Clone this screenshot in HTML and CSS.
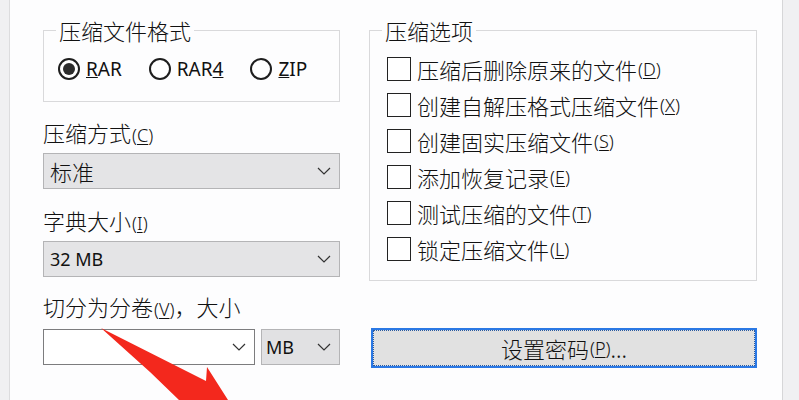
FILE: index.html
```html
<!DOCTYPE html>
<html lang="zh-CN">
<head>
<meta charset="utf-8">
<link rel="stylesheet" href="styles.css">
</head>
<body>
<div class="window">
  <div class="edge-left"></div>
  <div class="dialog">
    <div class="col-left">
      <fieldset class="group group-format">
        <legend>压缩文件格式</legend>
        <div class="radios">
          <div class="opt"><span class="radio on"></span><span class="lat"><u>R</u>AR</span></div>
          <div class="opt"><span class="radio"></span><span class="lat">RAR<u>4</u></span></div>
          <div class="opt"><span class="radio"></span><span class="lat"><u>Z</u>IP</span></div>
        </div>
      </fieldset>
      <div class="label first">压缩方式<span class="key">(<u>C</u>)</span></div>
      <div class="combo"><span class="val">标准</span><svg class="chev" viewBox="0 0 14 8"><path d="M1 1 L7 7 L13 1"/></svg></div>
      <div class="label">字典大小<span class="key">(<u>I</u>)</span></div>
      <div class="combo"><span class="val small">32 MB</span><svg class="chev" viewBox="0 0 14 8"><path d="M1 1 L7 7 L13 1"/></svg></div>
      <div class="label third">切分为分卷<span class="key">(<u>V</u>)</span>，大小</div>
      <div class="combo-row">
        <div class="combo edit"><span class="val"></span><svg class="chev" viewBox="0 0 14 8"><path d="M1 1 L7 7 L13 1"/></svg></div>
        <div class="combo unit"><span class="val small">MB</span><svg class="chev" viewBox="0 0 14 8"><path d="M1 1 L7 7 L13 1"/></svg></div>
      </div>
    </div>
    <div class="col-right">
      <fieldset class="group group-opts">
        <legend>压缩选项</legend>
        <div class="check"><span class="box"></span>压缩后删除原来的文件<span class="key">(<u>D</u>)</span></div>
        <div class="check"><span class="box"></span>创建自解压格式压缩文件<span class="key">(<u>X</u>)</span></div>
        <div class="check"><span class="box"></span>创建固实压缩文件<span class="key">(<u>S</u>)</span></div>
        <div class="check"><span class="box"></span>添加恢复记录<span class="key">(<u>E</u>)</span></div>
        <div class="check"><span class="box"></span>测试压缩的文件<span class="key">(<u>T</u>)</span></div>
        <div class="check"><span class="box"></span>锁定压缩文件<span class="key">(<u>L</u>)</span></div>
      </fieldset>
      <div class="btn">设置密码<span class="key">(<u>P</u>)</span>...</div>
    </div>
  </div>
  <div class="edge-right"></div>
</div>
<svg class="arrow" viewBox="0 0 799 400" width="799" height="400"><polygon points="101,328 206,381 207,367 228,400 179,400 150,372"/></svg>
</body>
</html>
```

FILE: styles.css
```css
html, body {
  margin: 0;
  padding: 0;
  width: 799px;
  height: 400px;
  overflow: hidden;
  background: #fdfdfe;
}
body {
  position: relative;
  font-family: "Noto Sans CJK SC", "Noto Sans", sans-serif;
  font-weight: 300;
  color: #111;
  font-size: 22px;
}
.window {
  display: flex;
  height: 400px;
}
.edge-left {
  width: 9px;
  background: #f0f0f2;
  border-right: 1px solid #dcdcde;
  flex: none;
}
.dialog {
  flex: 1;
  display: flex;
  gap: 29px;
  padding: 17px 0 0 33px;
  background: #fdfdfe;
}
.edge-right {
  width: 16px;
  flex: none;
  background: #f0f0f2;
  border-left: 1px solid #d6d6d8;
}
.col-left {
  width: 297px;
  display: flex;
  flex-direction: column;
}
.col-right {
  width: 388px;
  display: flex;
  flex-direction: column;
}
.group {
  margin: 0;
  border: 1px solid #d9d9db;
  min-width: 0;
}
.group legend {
  font-size: 22px;
  line-height: 26px;
  height: 26px;
  padding: 0 3px;
  margin-left: -2px;
}
.group-format {
  padding: 8px 0 14px 14px;
}
.radios {
  display: flex;
  gap: 27px;
  height: 36px;
  align-items: center;
}
.opt {
  display: flex;
  align-items: center;
  gap: 6px;
}
.lat {
  font-family: "Noto Sans", sans-serif;
  font-weight: 400;
  font-size: 19px;
  line-height: 24px;
}
.radio {
  width: 22px;
  height: 22px;
  border: 2px solid #1e1e1e;
  border-radius: 50%;
  box-sizing: border-box;
  display: flex;
  align-items: center;
  justify-content: center;
  background: #fff;
}
.radio.on::after {
  content: "";
  width: 12px;
  height: 12px;
  border-radius: 50%;
  background: #2c2c2c;
}
.label {
  height: 30px;
  line-height: 30px;
  margin-top: 16px;
  margin-bottom: 6px;
  white-space: nowrap;
}
.label.first {
  margin-top: 15px;
}
.label.third {
  margin-top: 14px;
  margin-bottom: 8px;
}
.key {
  font-family: "Noto Sans", sans-serif;
  font-weight: 300;
  font-size: 18px;
  line-height: 1;
  margin-left: 1px;
}
.key u {
  text-underline-offset: 2px;
}
.combo {
  height: 36px;
  box-sizing: border-box;
  border: 1px solid #b4b4b6;
  background: #e4e4e6;
  display: flex;
  align-items: center;
  justify-content: space-between;
  padding: 0 8px 0 6px;
}
.val {
  font-size: 22px;
  line-height: 30px;
}
.val.small {
  font-family: "Noto Sans", sans-serif;
  font-weight: 400;
  font-size: 18px;
}
.chev {
  width: 14px;
  height: 8px;
  fill: none;
  stroke: #333;
  stroke-width: 1.2;
}
.combo-row {
  display: flex;
  gap: 6px;
}
.combo.edit {
  width: 212px;
  background: #fff;
  border-color: #7c7c7e;
}
.combo.unit {
  width: 79px;
  padding-left: 4px;
  background: #e1e1e3;
}
.group-opts {
  padding: 8px 0 13px 17px;
}
.group-opts legend {
  margin-left: -5px;
}
.check {
  height: 36px;
  display: flex;
  align-items: center;
  white-space: nowrap;
}
.box {
  width: 24px;
  height: 24px;
  box-sizing: border-box;
  border: 1.5px solid #222;
  background: #fff;
  margin-right: 6px;
}
.btn {
  margin: 47px 0 0 2px;
  height: 40px;
  box-sizing: border-box;
  border: 2px solid #2a78e4;
  background: #e1e1e1;
  display: flex;
  align-items: center;
  justify-content: center;
  position: relative;
  line-height: 26px;
}
.btn::after {
  content: "";
  position: absolute;
  inset: 0;
  border: 1px dotted #2a5aa0;
}
.arrow {
  position: absolute;
  left: 0;
  top: 0;
  pointer-events: none;
}
.arrow polygon {
  fill: #f3281d;
}
```
